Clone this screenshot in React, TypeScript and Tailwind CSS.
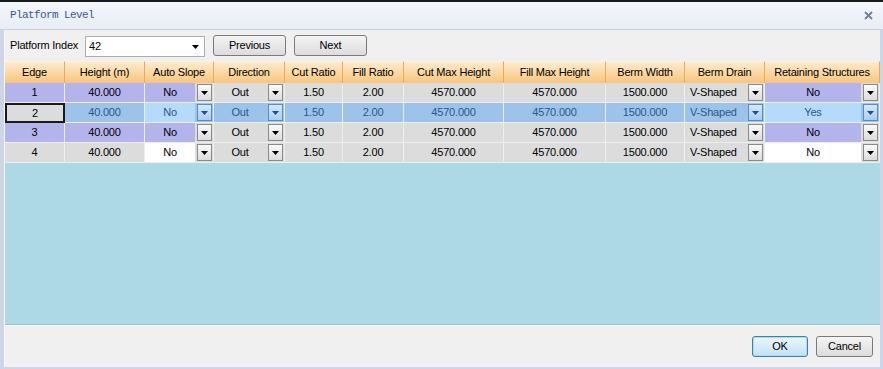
import React from 'react';

type ColKind = 'key' | 'plain' | 'combo' | 'comboEdit' | 'comboLeft';

const columns: { title: string; w: string; kind: ColKind }[] = [
  { title: 'Edge', w: 'w-[60px]', kind: 'key' },
  { title: 'Height (m)', w: 'w-[80px]', kind: 'key' },
  { title: 'Auto Slope', w: 'w-[69px]', kind: 'comboEdit' },
  { title: 'Direction', w: 'w-[71px]', kind: 'combo' },
  { title: 'Cut Ratio', w: 'w-[58px]', kind: 'plain' },
  { title: 'Fill Ratio', w: 'w-[61px]', kind: 'plain' },
  { title: 'Cut Max Height', w: 'w-[100px]', kind: 'plain' },
  { title: 'Fill Max Height', w: 'w-[102px]', kind: 'plain' },
  { title: 'Berm Width', w: 'w-[79px]', kind: 'plain' },
  { title: 'Berm Drain', w: 'w-[80px]', kind: 'comboLeft' },
  { title: 'Retaining Structures', w: 'w-[115px]', kind: 'comboEdit' },
];

const rows = [
  ['1', '40.000', 'No', 'Out', '1.50', '2.00', '4570.000', '4570.000', '1500.000', 'V-Shaped', 'No'],
  ['2', '40.000', 'No', 'Out', '1.50', '2.00', '4570.000', '4570.000', '1500.000', 'V-Shaped', 'Yes'],
  ['3', '40.000', 'No', 'Out', '1.50', '2.00', '4570.000', '4570.000', '1500.000', 'V-Shaped', 'No'],
  ['4', '40.000', 'No', 'Out', '1.50', '2.00', '4570.000', '4570.000', '1500.000', 'V-Shaped', 'No'],
];

function Arrow({ selected }: { selected?: boolean }) {
  return (
    <svg width="7" height="4" viewBox="0 0 7 4">
      <path d="M0 0h7L3.5 4z" fill={selected ? '#1d4f86' : '#000'} />
    </svg>
  );
}

function DropButton({ selected }: { selected: boolean }) {
  return (
    <div
      className={
        selected
          ? 'w-[15px] h-[17px] mr-[1px] flex items-center justify-center border border-[#5b8cc0] bg-gradient-to-b from-[#d6e8fa] to-[#a9cdf1]'
          : 'w-[15px] h-[17px] mr-[1px] flex items-center justify-center border border-[#8a8a8a] bg-gradient-to-b from-[#fafafa] to-[#dcdcdc]'
      }
    >
      <Arrow selected={selected} />
    </div>
  );
}

function Cell({ value, kind, ri, w }: { value: string; kind: ColKind; ri: number; w: string }) {
  const selected = ri === 1;
  const alt = ri === 0 || ri === 2;
  const base = selected ? 'bg-[#9dc3eb] text-[#28578a]' : 'bg-[#dcdcdc] text-black';
  const cls = `${w} h-[20px] shrink-0 border-r border-b border-[#eeeeee] flex items-center`;

  if (kind === 'key') {
    const isEdge = value.length === 1;
    if (selected && isEdge) {
      return (
        <div className={`${w} h-[20px] shrink-0 border-2 border-[#1a1a1a] bg-[#dcdcdc] text-black flex items-center justify-center`}>
          {value}
        </div>
      );
    }
    const bg = selected ? base : alt ? 'bg-[#b4b4ec] text-black' : base;
    return <div className={`${cls} justify-center ${bg}`}>{value}</div>;
  }

  if (kind === 'plain') {
    return <div className={`${cls} justify-center ${base}`}>{value}</div>;
  }

  let textBg = '';
  if (kind === 'comboEdit') {
    textBg = selected ? 'bg-[#b6dafa]' : alt ? 'bg-[#b4b4ec]' : 'bg-white';
  }
  return (
    <div className={`${cls} ${base}`}>
      <div
        className={`flex-1 h-full flex items-center ${kind === 'comboLeft' ? 'justify-start pl-[5px]' : 'justify-center'} ${textBg}`}
      >
        {value}
      </div>
      <div className="w-[18px] h-full flex items-center justify-end">
        <DropButton selected={selected} />
      </div>
    </div>
  );
}

export default function App() {
  return (
    <div className="w-[883px] h-[369px] bg-[#1a1a1a] pt-[2px] flex flex-col overflow-hidden font-['Liberation_Sans',Arial,sans-serif] text-[11px] tracking-[-0.2px] text-black">
      <div className="h-[28px] shrink-0 flex items-center justify-between pl-[10px] pr-[10px] bg-gradient-to-b from-[#f4f7fb] to-[#e8edf5] border-b border-[#cbd3df]">
        <span className="font-['Liberation_Mono',monospace] text-[11px] tracking-[-0.6px] text-[#35589a]">Platform Level</span>
        <svg width="9" height="9" viewBox="0 0 9 9">
          <path d="M1 1l7 7M8 1l-7 7" stroke="#6d7f9b" strokeWidth="1.8" />
        </svg>
      </div>

      <div className="flex-1 flex min-h-0">
        <div className="w-[4px] bg-[#cdd6e9] shrink-0" />
        <div className="flex-1 flex flex-col bg-[#f0f0f0] border-l border-[#f8f8f8]">
          <div className="h-[31px] shrink-0 flex items-center pl-[5px]">
            <span className="w-[75px]">Platform Index</span>
            <div className="w-[120px] h-[21px] bg-white border border-[#abadb3] flex items-center justify-between pl-[3px] pr-[5px] mt-[2px]">
              <span>42</span>
              <Arrow />
            </div>
            <button className="ml-[8px] w-[73px] h-[21px] border border-[#7a7a7a] rounded-[3px] bg-gradient-to-b from-[#f4f4f4] to-[#dcdcdc]">
              Previous
            </button>
            <button className="ml-[8px] w-[73px] h-[21px] border border-[#7a7a7a] rounded-[3px] bg-gradient-to-b from-[#f4f4f4] to-[#dcdcdc]">
              Next
            </button>
          </div>

          <div className="flex-1 flex flex-col min-h-0 bg-[#add8e6] border-b border-[#9cc5d4]">
            <div className="flex h-[22px] shrink-0">
              {columns.map((c) => (
                <div
                  key={c.title}
                  className={`${c.w} shrink-0 flex items-center justify-center border-r border-[#e2ad68] border-t border-t-[#fdf3e0] bg-gradient-to-b from-[#fdeccd] to-[#f8c57c]`}
                >
                  {c.title}
                </div>
              ))}
            </div>
            {rows.map((r, ri) => (
              <div key={ri} className="flex">
                {r.map((v, ci) => (
                  <Cell key={ci} value={v} kind={columns[ci].kind} ri={ri} w={columns[ci].w} />
                ))}
              </div>
            ))}
          </div>

          <div className="h-[42px] shrink-0 border-t border-white flex items-center justify-end pr-[7px] gap-[8px]">
            <button className="w-[56px] h-[21px] border border-[#3c7fb1] rounded-[3px] bg-gradient-to-b from-[#eaf6fd] to-[#c4e2f3] shadow-[inset_0_0_0_1px_#a8dcf5]">
              OK
            </button>
            <button className="w-[57px] h-[21px] border border-[#7a7a7a] rounded-[3px] bg-gradient-to-b from-[#f4f4f4] to-[#dcdcdc]">
              Cancel
            </button>
          </div>
        </div>
        <div className="w-[3px] bg-[#cdd6e9] shrink-0" />
      </div>
      <div className="h-[2px] bg-[#cdd6e9] shrink-0" />
    </div>
  );
}
